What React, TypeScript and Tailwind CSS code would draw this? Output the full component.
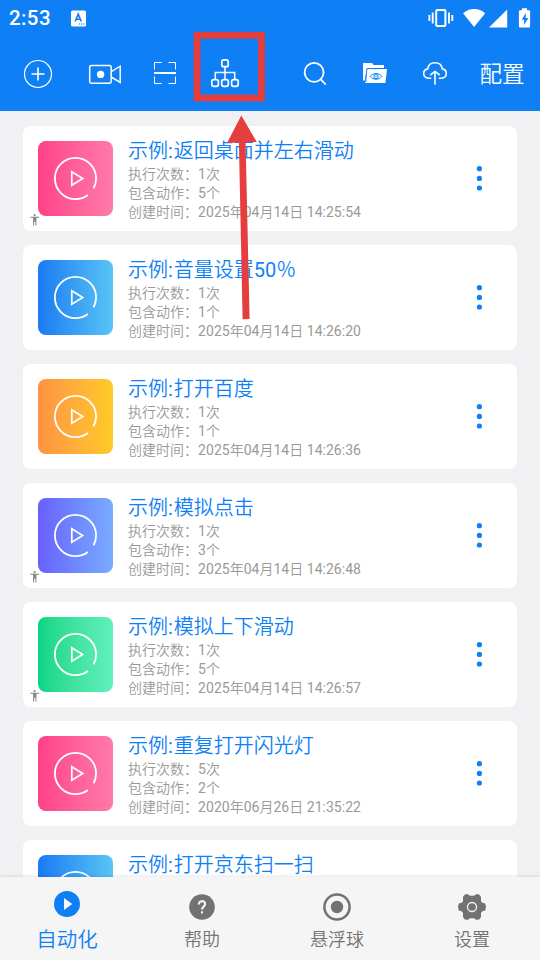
import React from "react";

type Task = {
  title: string;
  runs?: number;
  actions?: number;
  created?: string;
  color: string;
  accessible?: boolean;
};

const PINK = "from-[#ff4088] to-[#ff79a9]";
const BLUE = "from-[#1c79f3] to-[#59c4f5]";
const ORANGE = "from-[#ff9242] to-[#ffca28]";
const PURPLE = "from-[#685ffd] to-[#79abff]";
const GREEN = "from-[#04d585] to-[#60f0bc]";

const tasks: Task[] = [
  { title: "返回桌面并左右滑动", runs: 1, actions: 5, created: "2025年04月14日 14:25:54", color: PINK, accessible: true },
  { title: "音量设置50％", runs: 1, actions: 1, created: "2025年04月14日 14:26:20", color: BLUE },
  { title: "打开百度", runs: 1, actions: 1, created: "2025年04月14日 14:26:36", color: ORANGE },
  { title: "模拟点击", runs: 1, actions: 3, created: "2025年04月14日 14:26:48", color: PURPLE, accessible: true },
  { title: "模拟上下滑动", runs: 1, actions: 5, created: "2025年04月14日 14:26:57", color: GREEN, accessible: true },
  { title: "重复打开闪光灯", runs: 5, actions: 2, created: "2020年06月26日 21:35:22", color: PINK },
  { title: "打开京东扫一扫", color: BLUE },
];

function StatusBar() {
  return (
    <div className="flex h-[37px] items-center pl-[9px] pr-[9px]">
      <span className="w-[62px] text-[20.5px] font-medium leading-none tracking-[0.4px]">2:53</span>
      <svg width="15" height="17" viewBox="0 0 15 17">
        <rect width="15" height="16" y="0.5" rx="1.5" fill="#fff" />
        <path d="M4.2 11.5 L7.2 4.2 L10.3 11.5 M5.3 9.3 H9.1" fill="none" stroke="#0f7ff6" strokeWidth="1.6" />
        <path d="M7.8 14h1.3M10 14h1.3M12.2 14h1.3" stroke="#0f7ff6" strokeWidth="1.2" />
      </svg>
      <svg className="-mt-[2px] ml-auto" width="103" height="22" viewBox="0 0 103 22">
        <rect x="8.2" y="3" width="9.2" height="16" rx="1" fill="none" stroke="#fff" strokeWidth="2" />
        <path d="M4.7 5.5v11M21 5.5v11M1.4 8v6M24.3 8v6" stroke="#fff" strokeWidth="1.9" />
        <path d="M35 6.3 C41.5 0.6 51 0.6 57.2 6.3 L46.1 20 Z" fill="#fff" />
        <path d="M61 20.6 L79.2 2.4 V20.6 Z" fill="#fff" />
        <path d="M94 1.2h5v2h2a1.1 1.1 0 0 1 1.1 1.1v15.2a1.1 1.1 0 0 1-1.1 1.1h-9a1.1 1.1 0 0 1-1.1-1.1V4.3a1.1 1.1 0 0 1 1.1-1.1h2z" fill="#fff" />
        <path d="M97.7 6 L93.7 12.8 H96.2 V18 L100.2 11 H97.7 Z" fill="#0f7ff6" />
      </svg>
    </div>
  );
}

function Toolbar() {
  const cell = "flex w-[60px] items-center justify-center";
  return (
    <div className="flex h-[74px] items-stretch">
      <div className="flex w-[76px] items-center justify-center">
        <svg width="30" height="30" viewBox="0 0 30 30" fill="none" stroke="#fff">
          <circle cx="15" cy="15" r="13.5" strokeWidth="1.2" />
          <path d="M15 8.5v13M8.5 15h13" strokeWidth="1.6" />
        </svg>
      </div>
      <div className="flex w-[58px] items-center justify-center">
        <svg width="34" height="22" viewBox="0 0 34 22" fill="none" stroke="#fff" strokeWidth="1.5">
          <rect x="1.7" y="2.6" width="21.5" height="17.6" rx="1.6" />
          <circle cx="12.6" cy="11.4" r="3.7" fill="#fff" stroke="none" />
          <path d="M23.2 8.6 L32.2 3.2 V19.4 L23.2 14" />
        </svg>
      </div>
      <div className="ml-px flex w-[60px] items-center justify-center">
        <svg className="-mt-[2px]" width="24" height="24" viewBox="0 0 24 24" fill="none" stroke="#fff" strokeWidth="1">
          <path d="M1.5 8.5v-7h7M15.5 1.5h7v7M22.5 15.5v7h-7M8.5 22.5h-7v-7" />
          <path d="M1 12h22" strokeWidth="2" />
        </svg>
      </div>
      <div className={cell}>
        <svg className="-mt-[2px]" width="30" height="30" viewBox="0 0 30 30" fill="none" stroke="#fff" strokeWidth="1.7">
          <rect x="11.8" y="1.9" width="6.4" height="6.8" rx="1.8" />
          <rect x="1.8" y="21.7" width="6.6" height="6.6" rx="2" />
          <rect x="11.7" y="21.7" width="6.6" height="6.6" rx="2" />
          <rect x="21.6" y="21.7" width="6.6" height="6.6" rx="2" />
          <path d="M15 8.8V21M5.3 21v-6.6h19.4V21" strokeWidth="1.5" />
        </svg>
      </div>
      <div className="w-[30px]" />
      <div className={cell}>
        <svg className="-mt-[2px]" width="24" height="26" viewBox="0 0 24 26" fill="none" stroke="#fff" strokeWidth="1.8">
          <circle cx="11.1" cy="12.3" r="9.5" />
          <path d="M17.5 19.2 L22.8 24.6" />
        </svg>
      </div>
      <div className={cell}>
        <svg className="-mt-[2px]" width="24" height="22" viewBox="0 0 24 22">
          <path d="M0 1h9l1.6 2H21v3H4L1.6 18.5H0z" fill="#fff" />
          <path d="M4 7h20l-1.6 14H2.2z" fill="#fff" />
          <path d="M2.7 20 L3.9 6.6 H21.4" fill="none" stroke="#0f7ff6" strokeWidth="0.9" />
          <path d="M7.2 14.4 C10 10.6 16 10.6 18.9 14.4 C16 18.2 10 18.2 7.2 14.4Z" fill="none" stroke="#0f7ff6" strokeWidth="1" />
          <circle cx="13" cy="14.4" r="2.3" fill="none" stroke="#0f7ff6" />
          <circle cx="13" cy="14.4" r="0.8" fill="#0f7ff6" />
        </svg>
      </div>
      <div className={cell}>
        <svg className="-mt-[3px]" width="26" height="24" viewBox="0 0 26 24" fill="none" stroke="#fff" strokeWidth="1.6">
          <path d="M9.3 17.2H6.5C3.4 17.2 1.7 15 1.7 12.6C1.7 10 3.4 8.2 5.8 7.9C6.2 4.2 9 1.8 13 1.8C17 1.8 19.8 4.2 20.2 7.9C22.6 8.2 24.3 10 24.3 12.6C24.3 15 22.6 17.2 19.5 17.2H16.7" />
          <path d="M13 23.8V11M8.3 14 L13 10.4 L17.7 14" />
        </svg>
      </div>
      <div className="flex w-[74px] items-center justify-center pt-[2px] text-[22.5px]">配置</div>
    </div>
  );
}

function PlayThumb({ color }: { color: string }) {
  return (
    <div className={`flex size-[75px] shrink-0 items-center justify-center rounded-[8px] bg-linear-to-r ${color}`}>
      <svg width="45" height="45" viewBox="0 0 45 45" fill="none" stroke="#fff" strokeWidth="1.8">
        <circle cx="22.5" cy="22.5" r="20.6" strokeDasharray="120.8 8.63" strokeDashoffset="-18.9" strokeLinecap="butt" />
        <path d="M18.8 15.7V29.3l10.9-6.8z" strokeWidth="1.7" />
      </svg>
    </div>
  );
}

function TaskCard({ task }: { task: Task }) {
  return (
    <div className="relative flex h-[105px] shrink-0 items-center rounded-[8px] bg-white pl-[15px]">
      <PlayThumb color={task.color} />
      <div className="ml-[15px] flex-1 self-start whitespace-nowrap pt-[11px]">
        <div className="h-[28px] text-[20px] leading-[28px] text-[#0f7ff6]">
          示例<span className="tracking-[1px]">:</span>
          {task.title}
        </div>
        {task.created && (
          <div className="text-[14px] leading-[19px] tracking-[0.02px] text-[#999]">
            <div>执行次数：{task.runs}次</div>
            <div>包含动作：{task.actions}个</div>
            <div>创建时间：{task.created}</div>
          </div>
        )}
      </div>
      <svg className="-mt-[1px] mr-[35px]" width="6" height="26" viewBox="0 0 6 26" fill="#0f7ff6">
        <circle cx="3.4" cy="3.7" r="2.6" />
        <circle cx="3.4" cy="13.4" r="2.6" />
        <circle cx="3.4" cy="23" r="2.6" />
      </svg>
      {task.accessible && (
        <svg className="absolute bottom-[5px] left-[7px]" width="10" height="13" viewBox="0 0 10 13" fill="#858585">
          <circle cx="4.6" cy="2" r="1.1" />
          <path d="M0.3 3.7h8.8v1H6.4V12.6H5.4V8.8H4.1V12.6H3.1V4.7H.3z" />
        </svg>
      )}
    </div>
  );
}

function BottomNav() {
  const tab = "flex w-[135px] flex-col items-center pr-px";
  return (
    <nav className="relative flex h-[83px] shrink-0 bg-[#f5f5f5] text-[18px] leading-[26px] text-[#727272] shadow-[0_-1px_3px_rgba(0,0,0,0.1)]">
      <div className={`${tab} pt-[14px] text-[#0f7ff6]`}>
        <svg width="26" height="26" viewBox="0 0 26 26">
          <circle cx="13" cy="13" r="13" fill="#0f7ff6" />
          <path d="M10 7v12l8.3-6z" fill="#f5f5f5" />
        </svg>
        <span className="mt-[10px] text-[20.5px]">自动化</span>
      </div>
      <div className={`${tab} pt-[17px]`}>
        <svg width="26" height="26" viewBox="0 0 26 26">
          <circle cx="13" cy="13" r="12.8" fill="#727272" />
          <path d="M9.9 10.4C9.9 6.1 16.1 6.2 16.1 10.1C16.1 12.6 13 12.7 13 15.6" fill="none" stroke="#f5f5f5" strokeWidth="2.1" />
          <path d="M11.9 17.3h2.2v2.1h-2.2z" fill="#f5f5f5" />
        </svg>
        <span className="mt-[7px]">帮助</span>
      </div>
      <div className={`${tab} pt-[16px]`}>
        <svg width="28" height="28" viewBox="0 0 28 28">
          <circle cx="14" cy="14" r="12.6" fill="none" stroke="#727272" strokeWidth="2.5" />
          <circle cx="14" cy="14" r="6.2" fill="#727272" />
        </svg>
        <span className="mt-[6px]">悬浮球</span>
      </div>
      <div className={`${tab} pt-[16px]`}>
        <svg width="28" height="28" viewBox="0 0 28 28">
          <path
            d="M6.5 1.8L9.5 1.1L12 2.8H16L18.5 1.1L21.5 1.8L23 4V8.4L24.5 9.8L27.2 10.6L28 14L27.2 17.4L24.5 18.2L23 19.8V24L21.5 26.2L18.5 26.9L16 25.2H12L9.5 26.9L6.5 26.2L5 24V19.8L3.5 18.2L.8 17.4L0 14L.8 10.6L3.5 9.8L5 8.4V4Z"
            fill="#727272"
          />
          <circle cx="14" cy="14" r="4.5" fill="none" stroke="#f5f5f5" strokeWidth="1.3" />
        </svg>
        <span className="mt-[6px]">设置</span>
      </div>
    </nav>
  );
}

export default function App() {
  return (
    <div className="relative flex h-[960px] w-[540px] flex-col overflow-hidden bg-[#f1f1f3] font-[Roboto,'Noto_Sans_CJK_SC_DemiLight','Noto_Sans_CJK_SC_Light','Noto_Sans_CJK_SC',sans-serif]">
      <header className="h-[111px] shrink-0 bg-[#0f7ff6] text-white">
        <StatusBar />
        <Toolbar />
      </header>
      <main className="flex min-h-0 flex-1 flex-col gap-[14px] overflow-hidden px-[23px] pt-[15px]">
        {tasks.map((task) => (
          <TaskCard key={task.title} task={task} />
        ))}
      </main>
      <BottomNav />
      <svg className="pointer-events-none absolute left-[190px] top-[28px]" width="80" height="296" viewBox="190 28 80 296">
        <rect x="197" y="35.3" width="64.5" height="62.7" fill="none" stroke="#e43e3e" strokeWidth="6.8" />
        <path d="M241.3 115.5 L256.8 142 L245.6 142.2 L249.6 319 L242.6 319.2 L238.9 142.4 L227 143 Z" fill="#e43e3e" />
      </svg>
    </div>
  );
}
